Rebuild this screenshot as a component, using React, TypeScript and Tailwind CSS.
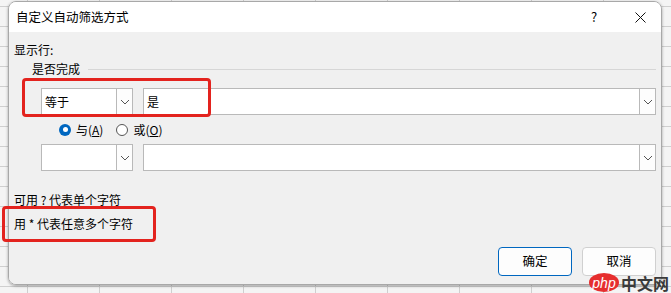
import React from "react";

const font = "font-['Microsoft_YaHei','Noto_Sans_CJK_SC','Noto_Sans',sans-serif]";

function Chevron() {
  return (
    <svg width="10" height="6" viewBox="0 0 10 6" fill="none">
      <path d="M1 1l4 4 4-4" stroke="#555" strokeWidth="1" />
    </svg>
  );
}

function Combo({ text, width }: { text?: string; width: string }) {
  return (
    <div className={`${width} h-[27px] flex bg-white border border-[#b9b9b9]`}>
      <div className="flex-1 flex items-center pl-[3px] text-[12px] text-black">{text}</div>
      <div className="w-[16px] border-l border-[#b9b9b9] flex items-center justify-center bg-[#fdfdfd]">
        <Chevron />
      </div>
    </div>
  );
}

export default function App() {
  return (
    <div
      className={`${font} w-[671px] h-[293px] overflow-hidden bg-[#f4f4f4] bg-[linear-gradient(#cfcfcf_1px,transparent_1px),linear-gradient(90deg,#cfcfcf_1px,transparent_1px)] bg-[size:72px_20px] bg-[position:27px_6px] pl-[8px] pt-[1px] relative`}
    >
      <div className="w-[654px] h-[284px] rounded-t-[8px] rounded-b-[8px] overflow-hidden border border-[#a8a8a8] shadow-[0_1px_3px_rgba(0,0,0,0.35)] flex flex-col relative">
        {/* title bar */}
        <div className="h-[30px] bg-white flex items-center">
          <div className="flex-1 pl-[7px] text-[12.5px] text-black">自定义自动筛选方式</div>
          <div className="w-[14px] text-[13px] text-black mr-[28px]">?</div>
          <div className="w-[14px] flex items-center justify-center mr-[14px]">
            <svg width="11" height="11" viewBox="0 0 11 11">
              <path d="M0.5 0.5l10 10M10.5 0.5l-10 10" stroke="#111" strokeWidth="1" />
            </svg>
          </div>
        </div>
        {/* body */}
        <div className="flex-1 bg-[#f0f0f0] flex flex-col text-[12px] text-black">
          <div className="pl-[5px] pt-[10px] leading-[16px]">显示行:</div>
          <div className="flex items-center mt-[3px] pl-[23px] pr-[5px] leading-[16px]">
            <span>是否完成</span>
            <div className="flex-1 h-px bg-[#d6d6d6] ml-[8px]" />
          </div>
          <div className="flex mt-[11px] pl-[32px] pr-[5px] gap-[10px]">
            <Combo text="等于" width="w-[92px]" />
            <Combo text="是" width="flex-1" />
          </div>
          <div className="flex items-center h-[29px] pl-[50px] leading-[16px]">
            <span className="w-[12px] h-[12px] rounded-full bg-[#0067c0] flex items-center justify-center">
              <span className="w-[5px] h-[5px] rounded-full bg-white" />
            </span>
            <span className="ml-[5px]">与(<span className="underline">A</span>)</span>
            <span className="ml-[13px] w-[12px] h-[12px] rounded-full border border-[#555] bg-white" />
            <span className="ml-[5px]">或(<span className="underline">O</span>)</span>
          </div>
          <div className="flex pl-[32px] pr-[5px] gap-[10px]">
            <Combo width="w-[92px]" />
            <Combo width="flex-1" />
          </div>
          <div className="pl-[5px] mt-[21px] leading-[16px]">可用 ? 代表单个字符</div>
          <div className="pl-[5px] mt-[8px] leading-[16px]">用 * 代表任意多个字符</div>
          <div className="flex justify-end gap-[10px] pr-[5px] mt-[15px]">
            <button className="w-[74px] h-[29px] rounded-[4px] border border-[#0067c0] bg-[#fdfdfd] text-[12.5px] text-black">
              确定
            </button>
            <button className="w-[74px] h-[29px] rounded-[4px] border border-[#d0d0d0] bg-[#fdfdfd] text-[12.5px] text-black">
              取消
            </button>
          </div>
        </div>
      </div>

      {/* annotation boxes */}
      <div className="absolute left-[22px] top-[78px] w-[189px] h-[39px] border-[3px] border-[#e3231e] rounded-[4px]" />
      <div className="absolute left-[2px] top-[206px] w-[154px] h-[36px] border-[3px] border-[#e3231e] rounded-[4px]" />

      {/* watermark */}
      <div className="absolute left-[589px] top-[273px] w-[82px] flex items-center whitespace-nowrap">
        <span className="shrink-0 w-[30px] h-[19px] rounded-[50%] bg-[#e62e2e] text-white text-[14px] leading-[16px] italic flex items-center justify-center font-['Liberation_Sans',sans-serif]">
          php
        </span>
        <span className="ml-[2px] text-[16px] leading-[18px] font-bold text-[#3a3a3a]">中文网</span>
      </div>
    </div>
  );
}
